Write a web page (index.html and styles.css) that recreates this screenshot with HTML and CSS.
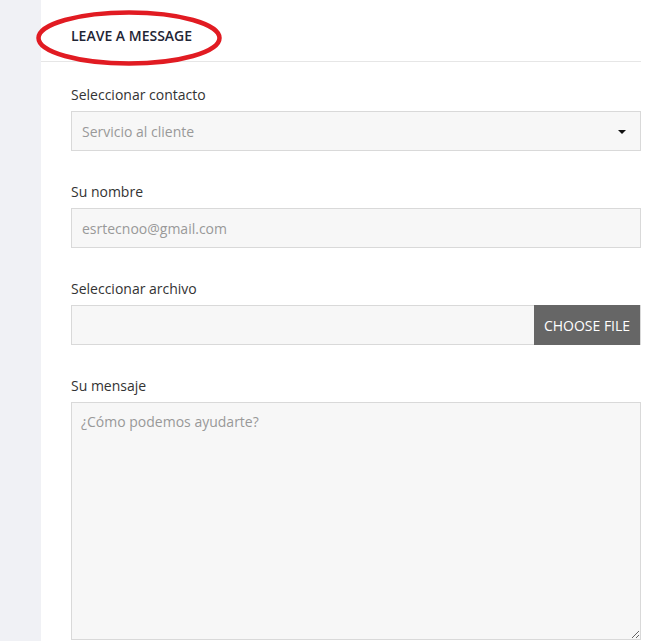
FILE: index.html
```html
<!DOCTYPE html>
<html lang="es">
<head>
<meta charset="utf-8">
<link rel="stylesheet" href="styles.css">
</head>
<body>
<div class="page">
  <aside class="sidebar"></aside>
  <main class="content">
    <div class="header">
      <h2 class="title">Leave a message</h2>
      <svg class="circle" width="190" height="60" viewBox="0 0 190 60">
        <ellipse cx="94" cy="29" rx="90.5" ry="25.5" fill="none" stroke="#e11b22" stroke-width="4.5"/>
      </svg>
    </div>
    <form class="form">
      <div class="group">
        <label class="label">Seleccionar contacto</label>
        <div class="select">
          <span class="placeholder">Servicio al cliente</span>
          <span class="caret"></span>
        </div>
      </div>
      <div class="group">
        <label class="label">Su nombre</label>
        <input class="input" type="text" placeholder="esrtecnoo@gmail.com">
      </div>
      <div class="group">
        <label class="label">Seleccionar archivo</label>
        <div class="file">
          <span class="file-name"></span>
          <span class="file-btn">CHOOSE FILE</span>
        </div>
      </div>
      <div class="group">
        <label class="label">Su mensaje</label>
        <textarea class="textarea" placeholder="¿Cómo podemos ayudarte?"></textarea>
      </div>
    </form>
  </main>
</div>
</body>
</html>
```

FILE: styles.css
```css
* { box-sizing: border-box; }
html, body { margin: 0; padding: 0; }
body {
  font-family: "Open Sans", "Liberation Sans", sans-serif;
  background: #fff;
  color: #333;
  overflow: hidden;
}
.page {
  display: flex;
  height: 641px;
}
.sidebar {
  width: 41px;
  flex: none;
  background: #f0f1f5;
}
.content {
  flex: 1;
  padding: 0 25px 0 0;
}
.header {
  position: relative;
  height: 62px;
  border-bottom: 1px solid #e6e6e6;
  padding: 26px 0 0 30px;
}
.title {
  margin: 0;
  font-size: 14px;
  font-weight: 600;
  text-transform: uppercase;
  color: #1f2535;
  line-height: 20px;
  letter-spacing: 0;
}
.circle {
  position: absolute;
  left: -6px;
  top: 9px;
}
.form {
  padding: 23px 0 0 30px;
}
.group {
  margin-bottom: 31px;
}
.label {
  display: block;
  font-size: 14px;
  line-height: 20px;
  color: #333;
  margin-bottom: 6px;
}
.select, .input, .file, .textarea {
  display: block;
  width: 570px;
  height: 40px;
  background: #f7f7f7;
  border: 1px solid #d9d9d9;
  font-family: "Open Sans", "Liberation Sans", sans-serif;
  font-size: 14px;
  color: #999;
}
.select {
  display: flex;
  align-items: center;
  justify-content: space-between;
  padding: 0 14px 0 10px;
}
.placeholder { color: #999; }
.caret {
  width: 0;
  height: 0;
  border-left: 4px solid transparent;
  border-right: 4px solid transparent;
  border-top: 4px solid #111;
  margin-top: 1px;
}
.input {
  padding: 0 10px;
  outline: none;
}
.input::placeholder, .textarea::placeholder { color: #999; opacity: 1; }
.file {
  display: flex;
  padding: 0;
  width: 570px;
}
.file-name { flex: 1; }
.file-btn {
  width: 106px;
  margin: -1px 0 -1px 0;
  background: #666;
  color: #fff;
  font-size: 14px;
  display: flex;
  align-items: center;
  justify-content: center;
}
.textarea {
  height: 238px;
  padding: 9px 9px;
  resize: vertical;
  outline: none;
}
```
